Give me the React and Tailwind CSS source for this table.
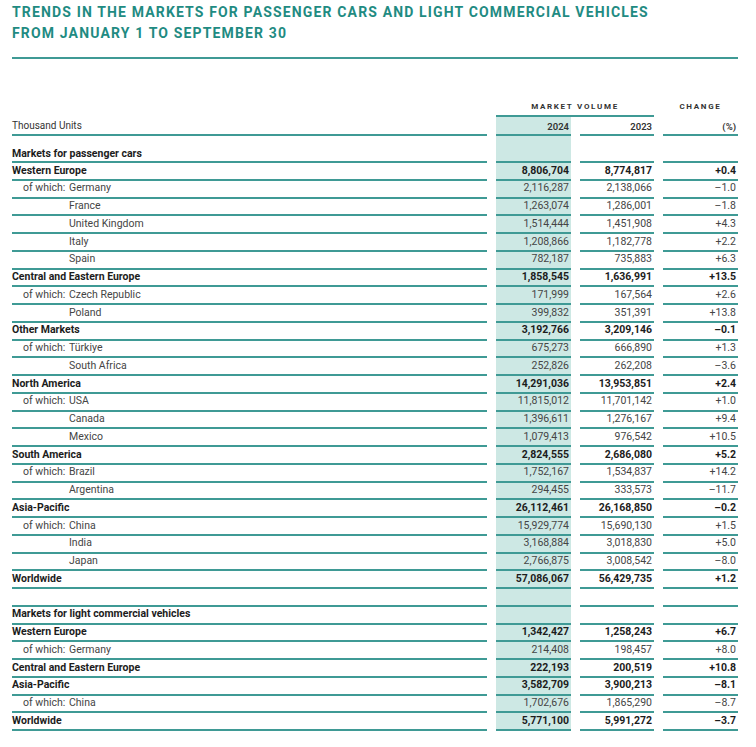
import React from 'react';

// Passenger car markets, Jan 1 - Sep 30
const passengerRows = [
  { label: 'Western Europe', a: '8,806,704', b: '8,774,817', c: '+0.4', bold: true },
  { label: 'Germany', of: true, a: '2,116,287', b: '2,138,066', c: '–1.0' },
  { label: 'France', sub: true, a: '1,263,074', b: '1,286,001', c: '–1.8' },
  { label: 'United Kingdom', sub: true, a: '1,514,444', b: '1,451,908', c: '+4.3' },
  { label: 'Italy', sub: true, a: '1,208,866', b: '1,182,778', c: '+2.2' },
  { label: 'Spain', sub: true, a: '782,187', b: '735,883', c: '+6.3' },
  { label: 'Central and Eastern Europe', a: '1,858,545', b: '1,636,991', c: '+13.5', bold: true },
  { label: 'Czech Republic', of: true, a: '171,999', b: '167,564', c: '+2.6' },
  { label: 'Poland', sub: true, a: '399,832', b: '351,391', c: '+13.8' },
  { label: 'Other Markets', a: '3,192,766', b: '3,209,146', c: '–0.1', bold: true },
  { label: 'Türkiye', of: true, a: '675,273', b: '666,890', c: '+1.3' },
  { label: 'South Africa', sub: true, a: '252,826', b: '262,208', c: '–3.6' },
  { label: 'North America', a: '14,291,036', b: '13,953,851', c: '+2.4', bold: true },
  { label: 'USA', of: true, a: '11,815,012', b: '11,701,142', c: '+1.0' },
  { label: 'Canada', sub: true, a: '1,396,611', b: '1,276,167', c: '+9.4' },
  { label: 'Mexico', sub: true, a: '1,079,413', b: '976,542', c: '+10.5' },
  { label: 'South America', a: '2,824,555', b: '2,686,080', c: '+5.2', bold: true },
  { label: 'Brazil', of: true, a: '1,752,167', b: '1,534,837', c: '+14.2' },
  { label: 'Argentina', sub: true, a: '294,455', b: '333,573', c: '–11.7' },
  { label: 'Asia-Pacific', a: '26,112,461', b: '26,168,850', c: '–0.2', bold: true },
  { label: 'China', of: true, a: '15,929,774', b: '15,690,130', c: '+1.5' },
  { label: 'India', sub: true, a: '3,168,884', b: '3,018,830', c: '+5.0' },
  { label: 'Japan', sub: true, a: '2,766,875', b: '3,008,542', c: '–8.0' },
  { label: 'Worldwide', a: '57,086,067', b: '56,429,735', c: '+1.2', bold: true },
];

const lcvRows = [
  { label: 'Western Europe', a: '1,342,427', b: '1,258,243', c: '+6.7', bold: true },
  { label: 'Germany', of: true, a: '214,408', b: '198,457', c: '+8.0' },
  { label: 'Central and Eastern Europe', a: '222,193', b: '200,519', c: '+10.8', bold: true },
  { label: 'Asia-Pacific', a: '3,582,709', b: '3,900,213', c: '–8.1', bold: true },
  { label: 'China', of: true, a: '1,702,676', b: '1,865,290', c: '–8.7' },
  { label: 'Worldwide', a: '5,771,100', b: '5,991,272', c: '–3.7', bold: true },
];

const line = 'border-b-2 border-[#3f9a95]';
const shade = 'bg-[#cde8e4]';

const Row = ({ row }) => {
  const txt = row.bold ? 'font-bold text-[#1c1c1c]' : 'text-[#454545]';
  return (
    <>
      <div className={`${line} ${txt} h-[17.75px] flex items-center`}>
        {row.of || row.sub ? (
          <span className="pl-[11px] flex">
            <span className="w-[46px] shrink-0">{row.of ? 'of which:' : ''}</span>
            <span>{row.label}</span>
          </span>
        ) : (
          row.label
        )}
      </div>
      <div className={`${line} ${shade} ${txt} h-[17.75px] flex items-center justify-end pr-[2px]`}>{row.a}</div>
      <div className={`${line} ${txt} h-[17.75px] flex items-center justify-end pr-[2px]`}>{row.b}</div>
      <div className={`${line} ${txt} h-[17.75px] flex items-center justify-end pr-[2px]`}>{row.c}</div>
    </>
  );
};

const SectionHead = ({ label, tall }) => (
  <>
    <div
      className={`${line} font-bold text-[#1c1c1c] flex ${tall ? 'h-[27px] items-end pb-[2px]' : 'h-[17.75px] items-center'}`}
    >
      {label}
    </div>
    <div className={`${line} ${shade}`} />
    <div className={line} />
    <div className={line} />
  </>
);

export default function App() {
  return (
    <div
      className="w-[756px] h-[747px] bg-white px-[12px] pt-[2px] overflow-hidden"
      style={{ fontFamily: 'Roboto, "Liberation Sans", sans-serif' }}
    >
      <h1 className="text-[14px] leading-[21px] font-bold tracking-[1.15px] text-[#1f8b82]">
        TRENDS IN THE MARKETS FOR PASSENGER CARS AND LIGHT COMMERCIAL VEHICLES
        <br />
        FROM JANUARY 1 TO SEPTEMBER 30
      </h1>
      <div className="mt-[13px] w-[726px] h-[2px] bg-[#3f9a95]" />

      <div className="grid grid-cols-[475px_75px_74px_75px] gap-x-[9px] mt-[41px] text-[10.5px] leading-none">
        {/* column headings */}
        <div />
        <div
          className={`col-span-2 ${line} h-[17px] flex items-end justify-center pb-[4px] text-[8px] font-bold tracking-[1.7px] text-[#333]`}
        >
          MARKET VOLUME
        </div>
        <div className="border-b-2 border-transparent h-[17px] flex items-end justify-center pb-[4px] text-[8px] font-bold tracking-[1.7px] text-[#333]">
          CHANGE
        </div>

        <div className={`${line} h-[19px] flex items-end pb-[3px] text-[10px] text-[#333]`}>Thousand Units</div>
        <div className={`${line} ${shade} h-[19px] flex items-end justify-end pb-[3px] pr-[2px] text-[9.5px] font-semibold text-[#333]`}>
          2024
        </div>
        <div className={`${line} h-[19px] flex items-end justify-end pb-[3px] pr-[2px] text-[9.5px] font-semibold text-[#333]`}>
          2023
        </div>
        <div className={`${line} h-[19px] flex items-end justify-end pb-[3px] pr-[2px] text-[9.5px] font-semibold text-[#333]`}>
          (%)
        </div>

        <SectionHead label="Markets for passenger cars" tall />
        {passengerRows.map((r, i) => (
          <Row key={'p' + i} row={r} />
        ))}

        <SectionHead label="" />
        <SectionHead label="Markets for light commercial vehicles" />
        {lcvRows.map((r, i) => (
          <Row key={'l' + i} row={r} />
        ))}
      </div>
    </div>
  );
}
